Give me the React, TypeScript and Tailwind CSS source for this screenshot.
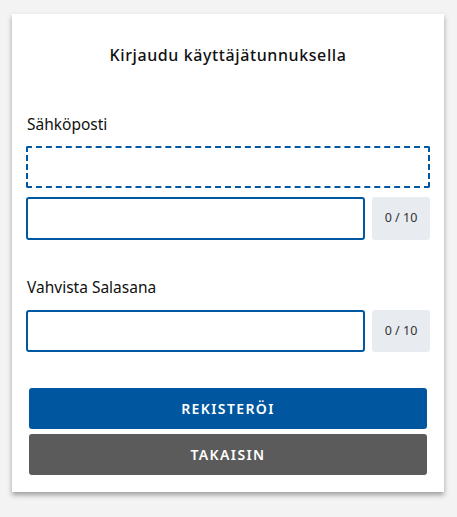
import React from "react";

export default function App() {
  const font = { fontFamily: '"Noto Sans", "Open Sans", sans-serif' };
  return (
    <div className="min-h-[517px] w-[457px] bg-[#f3f3f3] pt-[14px]" style={font}>
      <div className="ml-[12px] w-[432px] bg-white px-[14px] pb-[17px] pt-[29px] shadow-[0_3px_5px_rgba(0,0,0,0.35)]">
        <h1 className="h-[24px] text-center text-[16px] font-medium leading-[24px] tracking-[0.6px] text-[#111]">
          Kirjaudu käyttäjätunnuksella
        </h1>
        <div className="mt-[45px] h-[24px] pl-[1px] text-[15.5px] leading-[24px] text-[#111]">Sähköposti</div>
        <div className="mt-[10px] h-[42px] rounded-[2px] border-2 border-dashed border-[#0059a0]" />
        <div className="mt-[9px] flex h-[43px] gap-[7px]">
          <input className="h-full flex-1 rounded-[3px] border-2 border-[#0059a0] bg-white outline-none" />
          <div className="flex w-[58px] items-center justify-center rounded-[3px] bg-[#e8ecf0] text-[12.5px] text-[#333]">
            0 / 10
          </div>
        </div>
        <div className="mt-[35px] h-[24px] pl-[1px] text-[15.5px] leading-[24px] text-[#111]">Vahvista Salasana</div>
        <div className="mt-[11px] flex h-[42px] gap-[7px]">
          <input type="password" className="h-full flex-1 rounded-[3px] border-2 border-[#0059a0] bg-white outline-none" />
          <div className="flex w-[58px] items-center justify-center rounded-[3px] bg-[#e8ecf0] text-[12.5px] text-[#333]">
            0 / 10
          </div>
        </div>
        <div className="mx-[3px] mt-[36px] flex flex-col gap-[5px]">
          <button className="h-[41px] rounded-[3px] bg-[#0057a0] text-[14px] font-semibold tracking-[1.4px] text-white">
            REKISTERÖI
          </button>
          <button className="h-[41px] rounded-[3px] bg-[#5b5b5b] text-[14px] font-semibold tracking-[1.4px] text-white">
            TAKAISIN
          </button>
        </div>
      </div>
    </div>
  );
}
